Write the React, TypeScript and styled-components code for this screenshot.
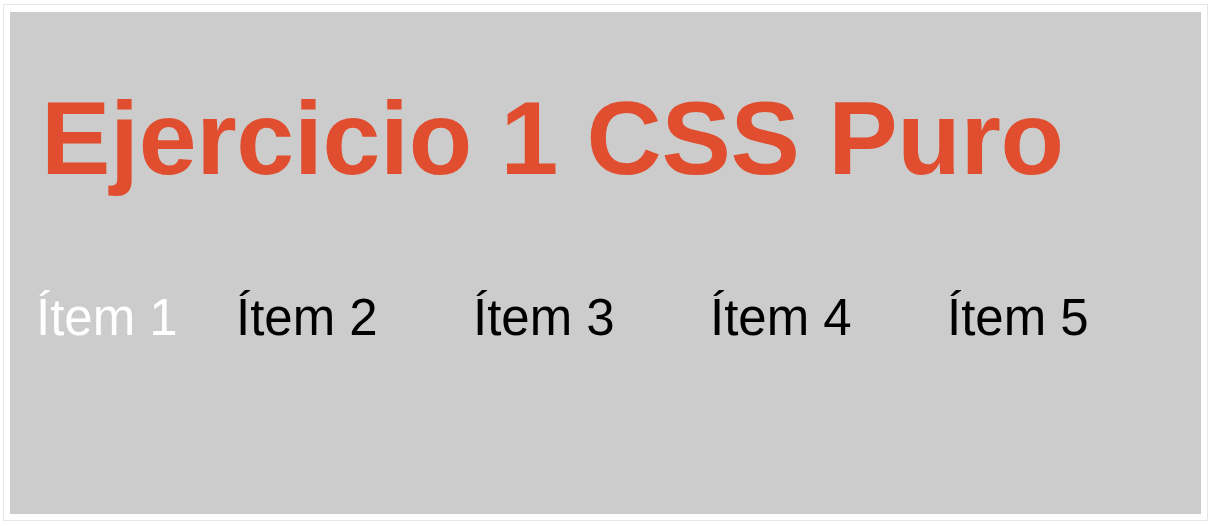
import styled, { createGlobalStyle } from "styled-components";

const GlobalStyle = createGlobalStyle`
  html, body {
    margin: 0;
    padding: 0;
    background: #ffffff;
  }
  body {
    font-family: "Liberation Sans", Arial, Helvetica, sans-serif;
  }
`;

// marco exterior
const Wrapper = styled.div`
  padding: 4px 4px 4px 3px;
`;

const Frame = styled.div`
  border: 1px solid #e6e6e6;
  padding: 7px 6px 6px 6px;
`;

// panel gris
const Panel = styled.div`
  background-color: #cccccc;
  height: 502px;
  padding: 74px 0 0 31px;
  box-sizing: border-box;
`;

const Title = styled.h1`
  margin: 0;
  color: #e04e2f;
  font-size: 104px;
  font-weight: bold;
  line-height: 1;
  letter-spacing: -0.3px;
`;

const Menu = styled.ul`
  display: flex;
  list-style: none;
  margin: 102px 0 0 -5px;
  padding: 0;
`;

const MenuItem = styled.li<{ $active?: boolean }>`
  width: 237px;
  flex-shrink: 0;
  font-size: 51px;
  line-height: 1;
  color: ${(p) => (p.$active ? "#ffffff" : "#000000")};

  &:first-child {
    width: 200px;
  }
`;

const items = ["Ítem 1", "Ítem 2", "Ítem 3", "Ítem 4", "Ítem 5"];

export default function App() {
  return (
    <>
      <GlobalStyle />
      <Wrapper>
        <Frame>
          <Panel>
            <Title>Ejercicio 1 CSS Puro</Title>
            <Menu>
              {items.map((item, i) => (
                <MenuItem key={item} $active={i === 0}>
                  {item}
                </MenuItem>
              ))}
            </Menu>
          </Panel>
        </Frame>
      </Wrapper>
    </>
  );
}
